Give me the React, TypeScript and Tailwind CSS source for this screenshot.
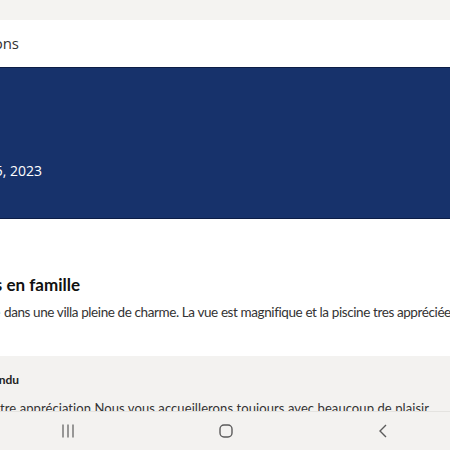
import React from "react";

// fragment de la page "Avis" d'une réservation, vue mobile
const NavBar = () => {
  return (
    <div className="flex h-[39px] shrink-0 items-center justify-between border-t border-[#e4e3e0] bg-[#f3f2f0] px-[59px] text-[#5b5b5b]">
      <svg width="18" height="16" viewBox="0 0 18 16" fill="none" stroke="currentColor" strokeWidth="1.2">
        <path d="M4 1.5v13M9 1.5v13M14 1.5v13" />
      </svg>
      <svg width="16" height="16" viewBox="0 0 16 16" fill="none" stroke="currentColor" strokeWidth="1.4">
        <rect x="2" y="2" width="12" height="12" rx="4" />
      </svg>
      <svg width="16" height="16" viewBox="0 0 16 16" fill="none" stroke="currentColor" strokeWidth="1.4">
        <path d="M11 2L5 8l6 6" />
      </svg>
    </div>
  );
};

const App = () => {
  return (
    <div className="flex h-[450px] w-[450px] flex-col overflow-hidden bg-white font-['Lato',sans-serif] text-[#222]">
      <div className="h-[20px] shrink-0 bg-[#f4f3f1]" />
      <div className="flex h-[47px] shrink-0 items-center">
        <div className="flex w-[19px] justify-end whitespace-nowrap font-['Open_Sans',sans-serif] text-[15px] text-[#333]">
          Mes réservations
        </div>
      </div>
      <div className="flex h-[152px] shrink-0 flex-col border-y border-[#0c1d46] bg-[#17326b] pt-[93px]">
        <div className="flex w-[42px] justify-end whitespace-nowrap font-['Open_Sans',sans-serif] text-[14px] leading-[20px] text-white">
          Séjour du juillet 15, 2023
        </div>
      </div>
      <div className="flex h-[137px] shrink-0 flex-col pt-[55px]">
        <div className="flex w-[80px] justify-end whitespace-nowrap text-[17px] font-bold leading-[22px] text-[#111]">
          Superbes vacances en famille
        </div>
        <div className="mt-[6px] flex whitespace-nowrap text-[13.5px] leading-[20px] tracking-[-0.4px] text-[#333]">
          <div className="flex w-0 shrink-0 justify-end">
            <span>Nous avons passé une semaine</span>
          </div>
          <span className="pl-[4px]">
            dans une villa pleine de charme. La vue est magnifique et la piscine tres appréciée par les enfants.
          </span>
        </div>
      </div>
      <div className="flex min-h-0 flex-1 flex-col overflow-hidden bg-[#f3f2f0] pt-[16px]">
        <div className="flex w-[19px] justify-end whitespace-nowrap text-[12px] font-bold leading-[16px] text-[#222]">
          L'hôte a répondu
        </div>
        <div className="mt-[10px] flex whitespace-nowrap text-[13px] leading-[20px] tracking-[0.08px] text-[#333]">
          <div className="flex w-0 shrink-0 justify-end">
            <span>Merci pour vo</span>
          </div>
          <span>tre appréciation Nous vous accueillerons toujours avec beaucoup de plaisir</span>
        </div>
      </div>
      <NavBar />
    </div>
  );
};

export default App;
